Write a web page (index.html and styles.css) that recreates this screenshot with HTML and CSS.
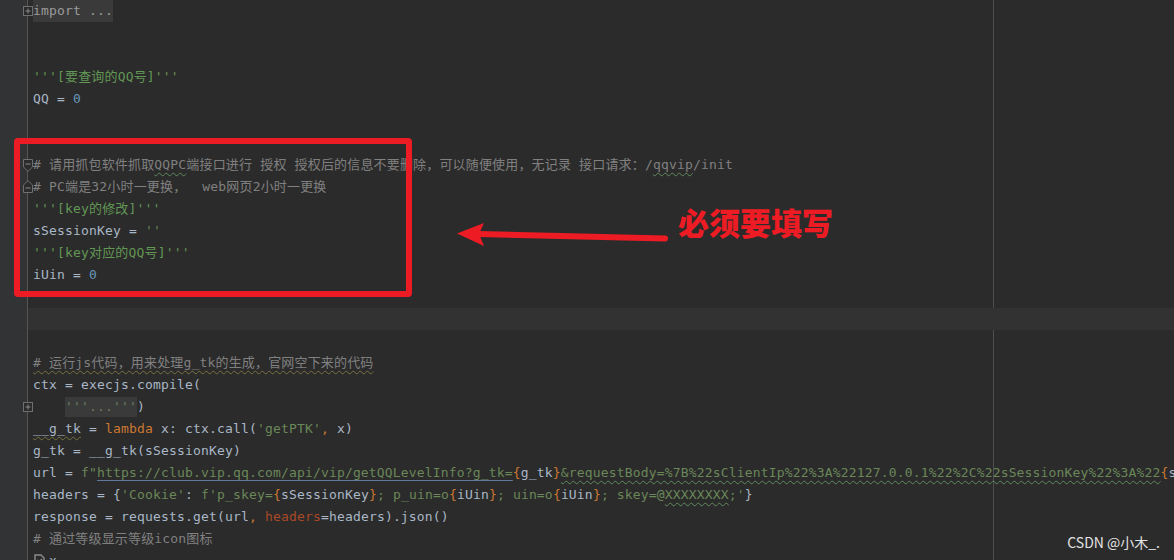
FILE: index.html
```html
<!DOCTYPE html>
<html lang="zh">
<head>
  <meta charset="UTF-8" />
  <title>QQ等级查询 - PyCharm</title>
  <link rel="stylesheet" href="styles.css">
</head>
<body>

  <div class="ide">
    <div class="gutter"></div>
    <div class="guide"></div>

    <!-- Editor lines -->
    <div class="code">
      <div class="ln"><span class="fold"><svg width="10" height="10" viewBox="0 0 10 10"><rect x="0.5" y="0.5" width="9" height="9" fill="#2b2b2b" stroke="#6f6f6f"/><path d="M2.5 5H7.5M5 2.5V7.5" stroke="#8a8a8a"/></svg></span><span class="folded">import ...</span></div>
      <div class="ln"></div>
      <div class="ln"></div>
      <div class="ln"><span class="doc">'''[要查询的QQ号]'''</span></div>
      <div class="ln">QQ = <span class="num">0</span></div>
      <div class="ln"></div>
      <div class="ln"></div>
      <div class="ln cmt"><span class="fold"><svg width="10" height="13" viewBox="0 0 10 13"><path d="M0.5 0.5H9.5V8L5 12.3L0.5 8Z" fill="#2b2b2b" stroke="#6f6f6f"/><path d="M2.5 5H7.5" stroke="#8a8a8a"/></svg></span># 请用抓包软件抓取<span class="typo">QQPC</span>端接口进行 授权 授权后的信息不要删除，可以随便使用，无记录 接口请求：/<span class="typo">qqvip</span>/init</div>
      <div class="ln cmt"><span class="fold up"><svg width="10" height="13" viewBox="0 0 10 13"><path d="M0.5 12.5H9.5V5L5 0.7L0.5 5Z" fill="#2b2b2b" stroke="#6f6f6f"/><path d="M2.5 8H7.5" stroke="#8a8a8a"/></svg></span># PC端是32小时一更换，  web网页2小时一更换</div>
      <div class="ln"><span class="doc">'''[key的修改]'''</span></div>
      <div class="ln">sSessionKey = <span class="str">''</span></div>
      <div class="ln"><span class="doc">'''[key对应的QQ号]'''</span></div>
      <div class="ln">iUin = <span class="num">0</span></div>
      <div class="ln"></div>
      <div class="ln current"></div>
      <div class="ln"></div>
      <div class="ln cmt"><span class="weak"># 运行js代码，用来处理g_tk的生成，官网空下来的代码</span></div>
      <div class="ln">ctx = execjs.compile(</div>
      <div class="ln"><span class="fold"><svg width="10" height="10" viewBox="0 0 10 10"><rect x="0.5" y="0.5" width="9" height="9" fill="#2b2b2b" stroke="#6f6f6f"/><path d="M2.5 5H7.5M5 2.5V7.5" stroke="#8a8a8a"/></svg></span>    <span class="folded str-fold">'''...'''</span>)</div>
      <div class="ln"><span class="weak">__g_tk</span> = <span class="kw">lambda</span> x: ctx.call(<span class="str">'getPTK'</span><span class="kw">,</span> x)</div>
      <div class="ln">g_tk = __g_tk(sSessionKey)</div>
      <div class="ln">url = <span class="str">f"<span class="link">https://club.vip.qq.com/api/vip/getQQLevelInfo?g_tk=</span></span><span class="kw">{</span>g_tk<span class="kw">}</span><span class="str"><span class="typo">&amp;requestBody=%7B%22sClientIp%22%3A%22127.0.0.1%22%2C%22sSessionKey%22%3A%22</span></span><span class="kw">{</span>sSessionKey<span class="kw">}</span><span class="str">%22%7D"</span></div>
      <div class="ln">headers = {<span class="str">'Cookie'</span>: <span class="str">f'p_skey=</span><span class="kw">{</span>sSessionKey<span class="kw">}</span><span class="str">; p_uin=o</span><span class="kw">{</span>iUin<span class="kw">}</span><span class="str">; uin=o</span><span class="kw">{</span>iUin<span class="kw">}</span><span class="str">; skey=@<span class="typo">XXXXXXXX</span>;'</span>}</div>
      <div class="ln">response = requests.get(url<span class="kw">,</span> <span class="arg">headers</span>=headers).json()</div>
      <div class="ln cmt"># 通过等级显示等级icon图标</div>
      <div class="ln"><svg class="pyicon" width="13" height="13" viewBox="0 0 13 13"><path d="M2 1H8L11 4V11H2Z" fill="none" stroke="#8c8c8c" stroke-width="1.4"/><path d="M4 6L6 8L9 5" fill="none" stroke="#8c8c8c" stroke-width="1.4"/></svg>x</div>
    </div>

    <!-- Annotation overlay -->
    <div class="mark-box"></div>
    <svg class="mark-arrow" width="220" height="40" viewBox="0 0 220 40">
      <line x1="22" y1="18" x2="208" y2="22.5" stroke="#ed1c24" stroke-width="6" stroke-linecap="round"/>
      <path d="M0 17.5L27 7L22 18L27 30Z" fill="#ed1c24"/>
    </svg>
    <div class="mark-text">必须要填写</div>

    <div class="watermark">CSDN @小木_.</div>
  </div>

</body>
</html>
```

FILE: styles.css
```css
body {
  margin: 0;
  padding: 0;
  background: #2b2b2b;
}

.ide {
  position: relative;
  display: flex;
  width: 1174px;
  height: 560px;
  overflow: hidden;
  background: #2b2b2b;
  font-family: 'DejaVu Sans Mono', 'Noto Sans CJK SC', monospace;
  font-size: 13px;
  letter-spacing: 0.17px;
  color: #a9b7c6;
}

.gutter {
  flex: 0 0 27px;
  background: #313335;
  border-right: 1px solid #555555;
}

.guide {
  position: absolute;
  left: 993px;
  top: 0;
  bottom: 0;
  width: 1px;
  background: #4e4e4e;
}

.code {
  position: relative;
  flex: 1;
  min-width: 0;
  padding-left: 5px;
}

.ln {
  position: relative;
  height: 22px;
  line-height: 22px;
  white-space: pre;
}

.ln.current {
  margin-left: -5px;
  background: #323232;
}

.fold {
  position: absolute;
  left: -10px;
  top: 6px;
  line-height: 0;
}

.cmt .fold {
  top: 5px;
}

.fold.up {
  top: 4px;
}

.folded {
  display: inline-block;
  height: 22px;
  background: #3a3a3a;
  color: #9a9a9a;
}

.str-fold {
  height: 20px;
  line-height: 20px;
  color: #6e7d62;
}

.cmt { color: #808080; }
.doc { color: #629755; }
.str { color: #6a8759; }
.num { color: #6897bb; }
.kw { color: #cc7832; }
.arg { color: #aa4926; }

.typo {
  text-decoration: underline wavy #5f8a5c;
  text-decoration-thickness: 1px;
  text-underline-offset: 3px;
}

.weak {
  text-decoration: underline wavy #76733f;
  text-decoration-thickness: 1px;
  text-underline-offset: 3px;
}

.link {
  text-decoration: underline;
  text-decoration-color: #5f7a9c;
  text-underline-offset: 3px;
}

.pyicon {
  vertical-align: -2px;
  margin-right: 3px;
}

.mark-box {
  position: absolute;
  left: 14px;
  top: 138px;
  width: 398px;
  height: 159px;
  box-sizing: border-box;
  border: 6px solid #ed1c24;
  border-radius: 4px;
}

.mark-arrow {
  position: absolute;
  left: 457px;
  top: 216px;
}

.mark-text {
  position: absolute;
  left: 678px;
  top: 201px;
  font-family: 'Noto Sans CJK SC', sans-serif;
  font-size: 31px;
  font-weight: 900;
  letter-spacing: 0;
  line-height: 42px;
  color: #ed1c24;
}

.watermark {
  position: absolute;
  right: 14px;
  bottom: 8px;
  font-family: 'Noto Sans CJK SC', 'Liberation Sans', sans-serif;
  font-size: 14px;
  letter-spacing: 0;
  color: #e2e2e2;
}
```
